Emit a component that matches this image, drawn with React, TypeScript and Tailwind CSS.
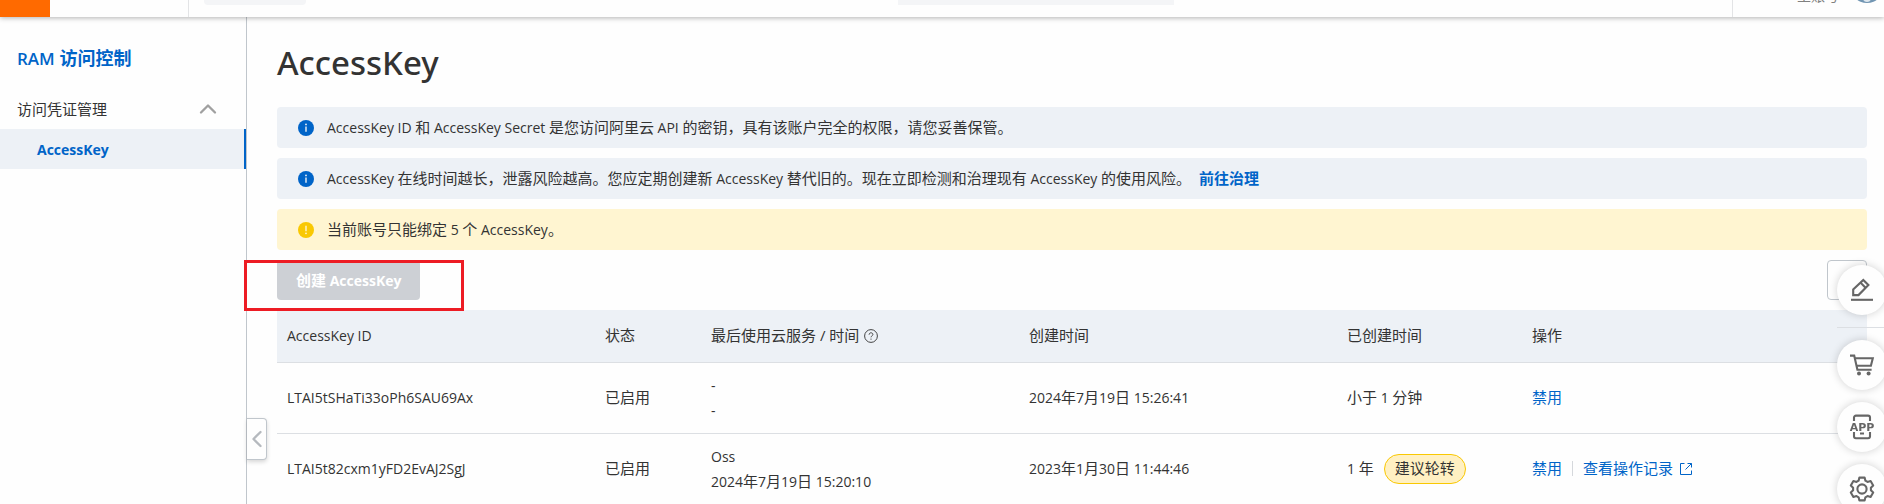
import { ReactNode } from 'react';
import { ChevronLeft, ChevronUp } from 'lucide-react';

const INFO_TEXT = 'AccessKey ID 和 AccessKey Secret 是您访问阿里云 API 的密钥，具有该账户完全的权限，请您妥善保管。';
const RISK_TEXT = 'AccessKey 在线时间越长，泄露风险越高。您应定期创建新 AccessKey 替代旧的。现在立即检测和治理现有 AccessKey 的使用风险。';

const keys = [
  {
    id: 'LTAI5tSHaTi33oPh6SAU69Ax',
    status: '已启用',
    service: '-',
    usedAt: '-',
    createdAt: '2024年7月19日 15:26:41',
    age: '小于 1 分钟',
    rotate: false,
    log: false,
  },
  {
    id: 'LTAI5t82cxm1yFD2EvAJ2SgJ',
    status: '已启用',
    service: 'Oss',
    usedAt: '2024年7月19日 15:20:10',
    createdAt: '2023年1月30日 11:44:46',
    age: '1 年',
    rotate: true,
    log: true,
  },
];

// Latin runs look too big next to the Chinese glyphs, so set them one size down
function Mixed({ text }: { text: string }) {
  return (
    <>
      {text.split(/([\x20-\x7e]+)/).map((part, i) =>
        i % 2 ? <span key={i} className="text-[14px]">{part}</span> : part
      )}
    </>
  );
}

function Notice({ type, children }: { type: 'info' | 'warning'; children: ReactNode }) {
  const info = type === 'info';
  return (
    <div className={`flex h-[41px] items-center gap-[13px] rounded-sm pl-[21px] ${info ? 'bg-[#edf1f6]' : 'bg-[#fff5d1]'}`}>
      <svg width="16" height="16" viewBox="0 0 16 16" className="shrink-0">
        <circle cx="8" cy="8" r="8" fill={info ? '#0064c8' : '#f9c802'} />
        {info ? (
          <g fill="#edf1f6">
            <circle cx="8" cy="4.4" r="0.9" />
            <path d="M7.3 6.4h1.4v5.4H7.3z" />
          </g>
        ) : (
          <g fill="#fff5d1">
            <path d="M7.3 3.8h1.4v5.4H7.3z" />
            <circle cx="8" cy="11.3" r="0.9" />
          </g>
        )}
      </svg>
      <p>{children}</p>
    </div>
  );
}

function TopBar() {
  return (
    <header className="relative z-10 flex h-[17px] shrink-0 items-end overflow-hidden bg-[#fefefe] shadow-[0_1px_5px_rgba(0,0,0,0.3)]">
      <div className="h-full w-[50px] bg-[#ff6a00]" />
      <div className="ml-[138px] h-full w-px bg-[#e3e4e6]" />
      <div className="mb-3 ml-[15px] h-8 w-[102px] rounded-sm bg-[#f4f5f7]" />
      <div className="mr-[558px] mb-3 ml-auto h-8 w-[276px] bg-[#f4f5f7]" />
      <div className="h-full w-px bg-[#e3e4e6]" />
      <span className="mb-3 ml-16 text-[14px] leading-[18px] text-[#808080]">主账号</span>
      <svg width="34" height="34" viewBox="0 0 34 34" className="mb-[14px] ml-[11px]">
        <circle cx="17" cy="17" r="17" fill="#7296b3" />
        <circle cx="17" cy="29" r="4" fill="#dfe8ef" />
      </svg>
    </header>
  );
}

function Sidebar() {
  return (
    <aside className="w-[247px] shrink-0 border-r border-[#c0c6cc] pt-[26px]">
      <h2 className="h-[30px] pl-[17px] text-[18px] leading-[30px] font-semibold text-[#0064c8]">
        <span className="text-[17px]">RAM</span> 访问控制
      </h2>
      <nav className="mt-4">
        <button className="flex h-10 w-full items-center justify-between pr-6 pl-[17px]">
          访问凭证管理
          <ChevronUp size={28} strokeWidth={2} className="text-[#a0a0a0]" />
        </button>
        <a href="#accesskey" className="flex h-10 items-center border-r-2 border-[#0064c8] bg-[#edf1f6] pl-[37px] text-[14px] font-bold text-[#0064c8]">
          AccessKey
        </a>
      </nav>
    </aside>
  );
}

function KeyTable() {
  return (
    <table className="mt-[10px] w-full table-fixed text-left">
      <colgroup>
        <col className="w-1/5" />
        <col className="w-[106px]" />
        <col className="w-1/5" />
        <col className="w-1/5" />
        <col className="w-[185px]" />
        <col />
      </colgroup>
      <thead>
        <tr className="h-[52px] border-b border-[#dcdfe3] bg-[#edf1f6] [&>th]:pl-[10px] [&>th]:font-normal">
          <th className="text-[14px]">AccessKey ID</th>
          <th>状态</th>
          <th>
            <div className="flex items-center gap-[5px]">
              最后使用云服务 / 时间
              <svg width="14" height="14" viewBox="0 0 14 14" fill="none" stroke="#444" strokeWidth="1">
                <circle cx="7" cy="7" r="6.4" />
                <path d="M5.1 5.7c0-1.1.8-1.9 1.9-1.9s1.9.7 1.9 1.7c0 1.3-1.9 1.4-1.9 2.8" />
                <path d="M7 9.6v1.1" />
              </svg>
            </div>
          </th>
          <th>创建时间</th>
          <th>已创建时间</th>
          <th>操作</th>
        </tr>
      </thead>
      <tbody>
        {keys.map((key) => (
          <tr key={key.id} className="h-[71px] border-b border-[#dcdfe3] [&>td]:pl-[10px]">
            <td className="text-[14px]">{key.id}</td>
            <td>{key.status}</td>
            <td>
              <div><Mixed text={key.service} /></div>
              <div><Mixed text={key.usedAt} /></div>
            </td>
            <td><Mixed text={key.createdAt} /></td>
            <td>
              <div className="flex items-center gap-[10px]">
                <span><Mixed text={key.age} /></span>
                {key.rotate && (
                  <span className="flex h-[30px] items-center rounded-full border border-[#f9c802] bg-[#fff0c2] px-[10px]">
                    建议轮转
                  </span>
                )}
              </div>
            </td>
            <td>
              <div className="flex items-center text-[#0064c8]">
                <a href="#disable">禁用</a>
                {key.log && (
                  <>
                    <span className="mx-[10px] h-[15px] w-px bg-[#d5d8dc]" />
                    <a href="#log" className="flex items-center gap-[7px]">
                      查看操作记录
                      <svg width="12" height="12" viewBox="0 0 12 12" fill="none" stroke="currentColor" strokeWidth="1">
                        <path d="M4.5.5h-4v11h11v-4M7.5.5h4v4M11.5.5 5.5 6.5" />
                      </svg>
                    </a>
                  </>
                )}
              </div>
            </td>
          </tr>
        ))}
      </tbody>
    </table>
  );
}

function FloatButton({ label, children }: { label: string; children: ReactNode }) {
  return (
    <button
      aria-label={label}
      className="flex size-[50px] items-center justify-center rounded-full bg-[#fefefe] text-[#666] shadow-[0_0_8px_rgba(0,0,0,0.18)]"
    >
      <svg width="26" height="26" viewBox="0 0 26 26" fill="none" stroke="currentColor" strokeWidth="2.1">
        {children}
      </svg>
    </button>
  );
}

function FloatBar() {
  return (
    <div className="fixed top-[265px] -right-[3px] z-20 flex flex-col gap-3">
      <FloatButton label="反馈">
        <path d="M4.2 18.1v-5.6L14.3 2.9l5.1 5.2-9.9 10z" />
        <path d="m11.6 5.6 4.9 5.2" />
        <path d="M2 22.8h22" />
      </FloatButton>
      <div className="h-px bg-[#dcdfe3]" />
      <FloatButton label="购物车">
        <path d="M1 3.6h4.2l3.2 14.2h14.2" />
        <path d="M5.8 6.2h18l-1.9 7.6H7.6" />
        <circle cx="10" cy="21.6" r="2" fill="currentColor" stroke="none" />
        <circle cx="19.6" cy="21.6" r="2" fill="currentColor" stroke="none" />
      </FloatButton>
      <FloatButton label="下载 APP">
        <path d="M5 7V3.6a2 2 0 0 1 2-2h12a2 2 0 0 1 2 2V7M5 18v4.2a2 2 0 0 0 2 2h12a2 2 0 0 0 2-2V18M11 19.5h4" />
        <text x="13" y="16.5" textAnchor="middle" fontSize="11" fontWeight="700" fontFamily="DejaVu Sans" fill="currentColor" stroke="none">
          APP
        </text>
      </FloatButton>
      <FloatButton label="设置">
        <path
          d="M10.4 1.6h5.2l.8 3.1 2.1 1.2 3.1-.9 2.6 4.5-2.3 2.2v2.6l2.3 2.2-2.6 4.5-3.1-.9-2.1 1.2-.8 3.1h-5.2l-.8-3.1-2.1-1.2-3.1.9-2.6-4.5 2.3-2.2v-2.6L1.8 9.5 4.4 5l3.1.9 2.1-1.2z"
          strokeLinejoin="round"
        />
        <circle cx="13" cy="13" r="4.6" />
      </FloatButton>
    </div>
  );
}

export default function App() {
  return (
    <div className="flex h-screen flex-col overflow-hidden bg-[#fefefe] font-['Open_Sans','Noto_Sans_CJK_SC',sans-serif] text-[15px] leading-[25px] text-[#333]">
      <TopBar />
      <div className="flex min-h-0 flex-1">
        <Sidebar />
        <main className="relative min-w-0 flex-1 pt-5 pr-[17px] pl-[30px]">
          <h1 className="font-['Noto_Sans',sans-serif] text-[33px] leading-[52px] font-medium">AccessKey</h1>
          <div className="mt-[18px] flex flex-col gap-[10px]">
            <Notice type="info"><Mixed text={INFO_TEXT} /></Notice>
            <Notice type="info">
              <Mixed text={RISK_TEXT} />
              <a href="#govern" className="ml-2 font-bold text-[#0064c8]">前往治理</a>
            </Notice>
            <Notice type="warning"><Mixed text="当前账号只能绑定 5 个 AccessKey。" /></Notice>
          </div>

          <div className="relative mt-[10px] flex justify-between">
            <button disabled className="h-10 rounded-sm bg-[#cdd0d5] px-[19px] font-bold text-white">
              <Mixed text="创建 AccessKey" />
            </button>
            <button aria-label="刷新" className="size-10 rounded-sm border border-[#c0c6cc]" />
            {/* highlight around the create button */}
            <div className="pointer-events-none absolute top-0 -left-[33px] z-10 h-[51px] w-[220px] border-3 border-[#ed1c24]" />
          </div>

          <KeyTable />

          <button
            aria-label="收起导航"
            className="absolute top-[401px] left-0 flex h-[42px] w-5 items-center justify-center rounded-r-sm border border-l-0 border-[#c0c6cc] bg-[#fefefe] text-[#b5b9be] shadow-[0_2px_4px_rgba(0,0,0,0.16)]"
          >
            <ChevronLeft size={28} strokeWidth={2} className="shrink-0" />
          </button>
        </main>
      </div>
      <FloatBar />
    </div>
  );
}
